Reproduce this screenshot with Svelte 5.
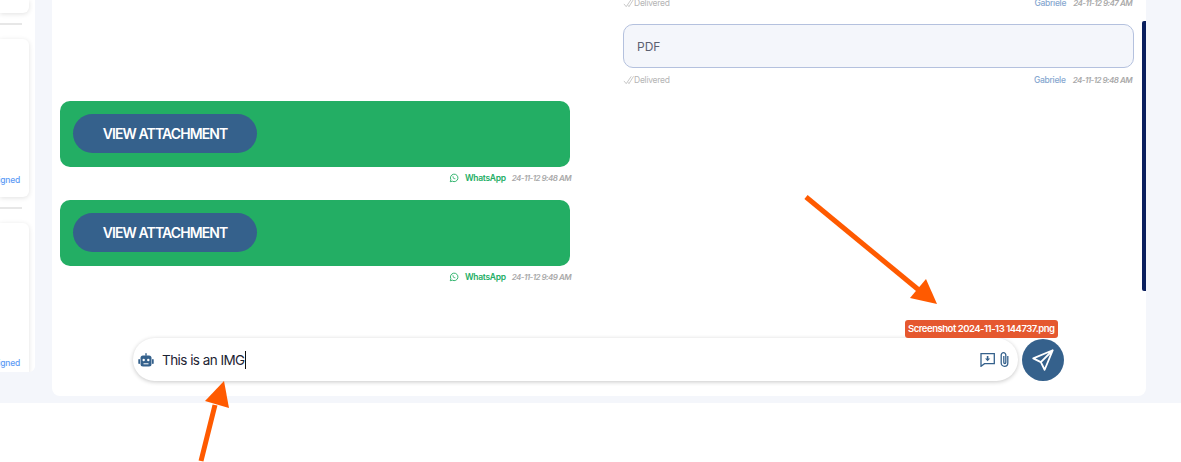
<script>
  const outgoing = [
    { id: 0, text: "", agent: "Gabriele", time: "24-11-12 9:47 AM" },
    { id: 1, text: "PDF", agent: "Gabriele", time: "24-11-12 9:48 AM" }
  ];
  const incoming = [
    { id: 2, time: "24-11-12 9:48 AM" },
    { id: 3, time: "24-11-12 9:49 AM" }
  ];
  let message = "This is an IMG";
</script>

<div class="page">
  <aside class="sidebar">
    <div class="card first"></div>
    <div class="divider"></div>
    <div class="card tall"><span>Assigned</span></div>
    <div class="divider"></div>
    <div class="card last"><span>Assigned</span></div>
  </aside>

  <main class="panel">
    <div class="thread">
      {#each outgoing as m (m.id)}
        <div class="row right">
          {#if m.text}
            <div class="bubble out">{m.text}</div>
          {/if}
          <div class="meta between">
            <span class="status">
              <svg viewBox="0 0 12 10" width="11" height="10"><path d="M1 6l2.500 3L9 1M5.500 7.500l1 1.500L11.500 1" /></svg>
              Delivered
            </span>
            <span><span class="agent">{m.agent}</span><em>{m.time}</em></span>
          </div>
        </div>
      {/each}

      {#each incoming as m (m.id)}
        <div class="row left">
          <div class="bubble in">
            <button>VIEW ATTACHMENT</button>
          </div>
          <div class="meta end">
            <svg class="wa" viewBox="0 0 24 24" width="10" height="10">
              <path d="M3 21l1.500-5A9 9 0 1 1 8 19.600z" />
              <path d="M9 8c-1 1-.6 2.600 1 4.500s3.400 3 4.800 2.500l1-1.200-2-1.300-1 .7c-1-.5-1.800-1.400-2.300-2.400l.8-.9-1-2.100z" />
            </svg>
            <span class="channel">WhatsApp</span><em>{m.time}</em>
          </div>
        </div>
      {/each}
    </div>

    <div class="composer">
      <div class="input">
        <svg class="bot" viewBox="0 0 16 14" width="16" height="14">
          <rect x="7.300" y="0" width="1.400" height="3" rx=".7" />
          <rect x="2.500" y="2.500" width="11" height="11" rx="2.500" />
          <rect x="0.300" y="6" width="1.700" height="5" rx=".8" />
          <rect x="14" y="6" width="1.700" height="5" rx=".8" />
          <circle cx="5.700" cy="7" r="1.200" fill="#fff" />
          <circle cx="10.300" cy="7" r="1.200" fill="#fff" />
          <rect x="5.500" y="10.300" width="5" height="1" fill="#fff" />
        </svg>
        <span class="typed">{message}</span>
        <span class="icons">
          <svg class="msg" viewBox="0 0 15 14" width="15" height="14">
            <path d="M1 .7h13.300v10H4.500L1 13.300z" />
            <path class="fill" d="M6.800 3h1.600v2.500h1.800L7.600 8.300 5 5.500h1.800z" />
          </svg>
          <svg viewBox="0 0 9 15" width="9" height="15">
            <path d="M7.800 4v7a3.300 3.300 0 0 1-6.600 0V3a2.300 2.300 0 0 1 4.600 0v7.500a1 1 0 0 1-2 0V4" />
          </svg>
        </span>
      </div>
      <button class="send" aria-label="Send">
        <svg viewBox="0 0 24 24" width="26" height="26">
          <path d="M21 3L3 10.500l7 3.500 3.500 7zM21 3L10 14" />
        </svg>
      </button>
      <span class="filetag">Screenshot 2024-11-13 144737.png</span>
    </div>

    <div class="scrollbar"></div>
  </main>

  <svg class="arrows" viewBox="0 0 1181 462" width="1181" height="462">
    <path d="M806 197L920 291" />
    <polygon points="926,279 937,304 910,298" />
    <path d="M201 461L215 405" />
    <polygon points="205,401 224,381 229,408" />
  </svg>
</div>

<style>
  :global(body) {
    margin: 0;
    background: #fff;
  }

  .page {
    position: relative;
    width: 1181px;
    height: 462px;
    overflow: hidden;
    font-family: Inter, "Noto Sans", sans-serif;
    display: flex;
    align-items: flex-start;
    background: linear-gradient(#f4f6fb 403px, #fff 403px);
  }

  .sidebar {
    width: 35px;
    height: 372px;
    background: #fff;
    border-radius: 0 0 6px 0;
    margin-right: 17px;
    flex: none;
    display: flex;
    flex-direction: column;
    overflow: hidden;
  }

  .card {
    width: 29px;
    box-sizing: border-box;
    background: #fff;
    border-radius: 0 0 6px 0;
    box-shadow: 0 1px 5px rgba(0, 0, 0, 0.12);
    flex: none;
    display: flex;
    align-items: flex-end;
    justify-content: flex-end;
    overflow: hidden;
  }

  .card.first { height: 13px; }
  .card.tall { height: 158px; margin-top: 14px; padding-bottom: 12px; border-radius: 0 6px 6px 0; }
  .card.last { height: 150px; margin-top: 14px; padding-bottom: 5px; border-radius: 0 6px 0 0; }

  .card span {
    font-size: 8.5px;
    font-weight: 500;
    letter-spacing: -0.2px;
    color: #5c9bf5;
    padding-right: 9px;
    white-space: nowrap;
  }

  .divider {
    flex: none;
    width: 22px;
    height: 2px;
    margin-top: 10px;
    background: #e7e7e7;
  }

  .panel {
    position: relative;
    width: 1094px;
    height: 396px;
    flex: none;
    background: #fff;
    border-radius: 0 0 8px 8px;
    display: flex;
    flex-direction: column;
  }

  .thread {
    height: 287px;
    padding: 0 12px 0 8px;
    overflow: hidden;
    display: flex;
    flex-direction: column;
    justify-content: flex-end;
    flex: none;
  }

  .row {
    width: 511px;
    flex: none;
    margin-bottom: 12px;
  }

  .row:last-child { margin-bottom: 0; }
  .row.right { align-self: flex-end; }
  .row.left { align-self: flex-start; }

  .bubble {
    box-sizing: border-box;
    border-radius: 10px;
  }

  .bubble.out {
    height: 44px;
    padding: 0 13px;
    display: flex;
    align-items: center;
    font-size: 12px;
    color: #5b6070;
    background: #f4f6fb;
    border: 1px solid #b4c1de;
  }

  .bubble.in {
    width: 510px;
    height: 66px;
    padding: 13px;
    background: #23ae64;
  }

  .bubble.in button {
    width: 184px;
    height: 39px;
    border: 0;
    border-radius: 20px;
    background: #35618c;
    color: #fff;
    font: 600 14px Inter, sans-serif;
    letter-spacing: -0.9px;
    padding: 0;
  }

  .meta {
    display: flex;
    align-items: center;
    box-sizing: border-box;
    height: 21px;
    font-size: 8.5px;
    color: #a9a9a9;
  }

  .meta.between {
    justify-content: space-between;
    padding: 3px 2px 0 0;
  }

  .meta.end {
    justify-content: flex-end;
  }

  .status {
    display: inline-flex;
    align-items: center;
    letter-spacing: -0.25px;
    color: #b5b5b5;
  }

  .status svg path {
    fill: none;
    stroke: #b5b5b5;
    stroke-width: 0.8;
  }

  .agent {
    color: #86a7d0;
    font-weight: 500;
    letter-spacing: -0.3px;
    margin-right: 7px;
  }

  em {
    font-size: 8px;
    font-style: italic;
    font-weight: 600;
    letter-spacing: -0.55px;
    color: #a9a9a9;
  }

  .channel {
    color: #23ae64;
    font-weight: 600;
    letter-spacing: -0.3px;
    margin: 0 6px;
  }

  .wa path:first-child {
    fill: none;
    stroke: #23ae64;
    stroke-width: 2.2;
  }

  .wa path:last-child { fill: #23ae64; }

  .composer {
    position: relative;
    margin: 51px 0 0 81px;
    display: flex;
    align-items: center;
    gap: 4px;
    width: 931px;
  }

  .input {
    box-sizing: border-box;
    width: 885px;
    height: 43px;
    border-radius: 22px;
    background: #fff;
    box-shadow: 0 1px 4px rgba(0, 0, 0, 0.22);
    display: flex;
    align-items: center;
    padding: 0 9px 0 5px;
  }

  .bot { fill: #35618c; flex: none; }

  .typed {
    margin-left: 8px;
    font-size: 13.5px;
    letter-spacing: -0.55px;
    color: #1d2433;
    border-right: 1px solid #111;
    line-height: 18px;
    flex: none;
  }

  .icons {
    margin-left: auto;
    display: flex;
    align-items: center;
    gap: 5px;
  }

  .icons svg path {
    fill: none;
    stroke: #35618c;
    stroke-width: 1.3;
  }

  .icons svg path.fill {
    fill: #35618c;
    stroke: none;
  }

  .send {
    width: 42px;
    height: 42px;
    border: 0;
    padding: 0;
    border-radius: 50%;
    background: #35618c;
    display: flex;
    align-items: center;
    justify-content: center;
  }

  .send path {
    fill: none;
    stroke: #fff;
    stroke-width: 1.7;
    stroke-linejoin: round;
  }

  .filetag {
    position: absolute;
    left: 772px;
    top: -18px;
    height: 18px;
    padding: 0 3px;
    line-height: 18px;
    border-radius: 3px;
    background: #e5582f;
    color: #fff;
    font-size: 9.5px;
    font-weight: 600;
    letter-spacing: -0.47px;
    white-space: nowrap;
  }

  .scrollbar {
    position: absolute;
    right: 0;
    top: 21px;
    width: 4px;
    height: 270px;
    border-radius: 2px 0 0 2px;
    background: #0a1f5e;
  }

  .arrows {
    position: absolute;
    left: 0;
    top: 0;
    pointer-events: none;
  }

  .arrows path {
    fill: none;
    stroke: #ff5a00;
    stroke-width: 5;
  }

  .arrows polygon { fill: #ff5a00; }
</style>
